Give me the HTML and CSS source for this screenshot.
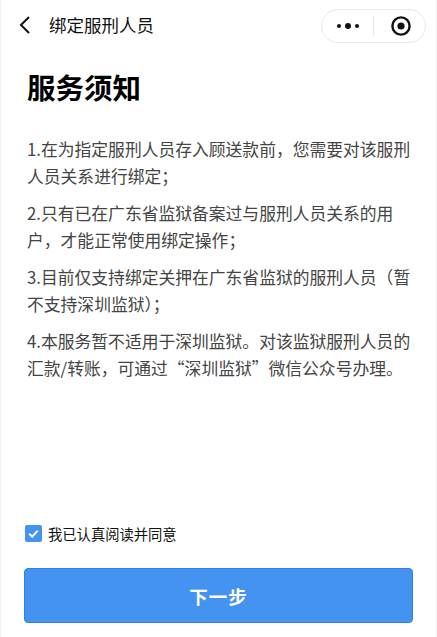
FILE: index.html
```html
<!DOCTYPE html>
<html lang="zh-CN">
<head>
<meta charset="utf-8">
<title>绑定服刑人员</title>
<link rel="stylesheet" href="styles.css">
</head>
<body>
<div class="page">
  <header class="nav">
    <svg class="back" width="14" height="20" viewBox="0 0 14 20"><path d="M11 2 L3 10 L11 18" fill="none" stroke="#111" stroke-width="2"/></svg>
    <span class="nav-title">绑定服刑人员</span>
    <div class="capsule">
      <span class="more"><i class="dot"></i><i class="dot big"></i><i class="dot"></i></span>
      <span class="divider"></span>
      <svg class="target" width="22" height="22" viewBox="0 0 22 22"><circle cx="11" cy="11" r="8.6" fill="none" stroke="#111" stroke-width="2.4"/><circle cx="11" cy="11" r="3.6" fill="#111"/></svg>
    </div>
  </header>
  <main class="content">
    <h1 class="heading">服务须知</h1>
    <p class="item">1.在为指定服刑人员存入顾送款前，您需要对该服刑人员关系进行绑定；</p>
    <p class="item">2.只有已在广东省监狱备案过与服刑人员关系的用户，才能正常使用绑定操作；</p>
    <p class="item">3.目前仅支持绑定关押在广东省监狱的服刑人员（暂不支持深圳监狱）；</p>
    <p class="item">4.本服务暂不适用于深圳监狱。对该监狱服刑人员的汇款/转账，可通过“深圳监狱”微信公众号办理。</p>
  </main>
  <footer class="footer">
    <label class="agree">
      <span class="checkbox"><svg width="17" height="17" viewBox="0 0 17 17"><path d="M4.2 8.8 L7.2 11.6 L12.8 5.6" fill="none" stroke="#fff" stroke-width="2"/></svg></span>
      <span class="agree-text">我已认真阅读并同意</span>
    </label>
    <button class="next">下一步</button>
  </footer>
</div>
</body>
</html>
```
FILE: styles.css
```css
* { box-sizing: border-box; }
html, body { margin: 0; padding: 0; background: #fff; }
body {
  font-family: "Noto Sans CJK SC", "Noto Sans", sans-serif;
  color: #333;
}
.page {
  width: 437px;
  height: 637px;
  display: flex;
  flex-direction: column;
  border-left: 1px solid #f0f0f0;
  border-right: 1px solid #f0f0f0;
}
.nav {
  height: 50px;
  display: flex;
  align-items: center;
  padding-left: 17px;
  padding-right: 10px;
}
.back { display: block; }
.nav-title {
  margin-left: 17px;
  font-size: 17.5px;
  color: #111;
  line-height: 24px;
}
.capsule {
  margin-left: auto;
  width: 105px;
  height: 34px;
  border: 1px solid #e9e9e9;
  border-radius: 17px;
  display: flex;
  align-items: center;
  margin-top: 1px;
}
.more {
  width: 51px;
  display: flex;
  justify-content: center;
  align-items: center;
  gap: 4px;
}
.dot {
  display: block;
  width: 4px;
  height: 4px;
  border-radius: 50%;
  background: #111;
}
.dot.big { width: 6px; height: 6px; }
.divider {
  width: 1px;
  height: 20px;
  background: #e6e6e6;
}
.target { display: block; margin-left: 16px; }
.content {
  padding: 0 25px 0 26px;
}
.heading {
  margin: 17px 0 0;
  font-size: 28.5px;
  line-height: 40px;
  font-weight: 700;
  color: #000;
}
.item {
  margin: 10px 0 0;
  font-size: 16.8px;
  line-height: 27px;
  color: #444;
}
.heading + .item { margin-top: 29px; }
.footer {
  margin-top: auto;
  padding: 0 23px 14px 23px;
  display: flex;
  flex-direction: column;
}
.agree {
  display: flex;
  align-items: center;
  height: 20px;
  margin-bottom: 25px;
  padding-left: 1px;
}
.checkbox {
  width: 17px;
  height: 17px;
  border-radius: 2px;
  background: #4593f0;
  display: block;
}
.checkbox svg { display: block; }
.agree-text {
  margin-left: 6px;
  font-size: 14.3px;
  color: #111;
}
.next {
  height: 55px;
  width: 100%;
  border: 1px solid #2f7fe8;
  border-radius: 4px;
  background: #4593f0;
  color: #fff;
  font-family: inherit;
  font-size: 18.5px;
  font-weight: 700;
  letter-spacing: 1px;
}
```
